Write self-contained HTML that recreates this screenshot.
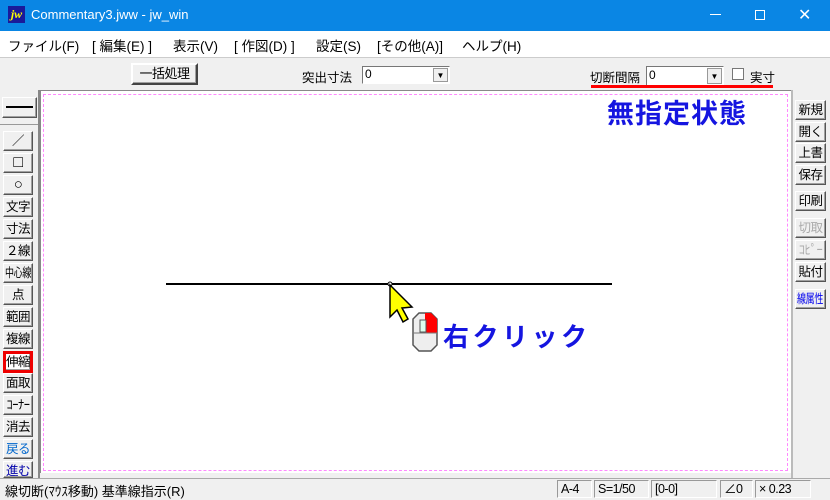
<!DOCTYPE html><html><head><meta charset="utf-8"><style>
*{margin:0;padding:0;box-sizing:border-box}
body{width:830px;height:500px;overflow:hidden;background:#f0f0f0;font-family:"Liberation Sans","Noto Sans CJK JP",sans-serif;position:relative;font-size:13px;color:#000}
.a{position:absolute}
.btn{position:absolute;background:#f0f0f0;border:1px solid;border-color:#fff #555 #555 #fff;box-shadow:inset -1px -1px 0 #a0a0a0;font-size:12.5px;text-align:center;line-height:18px;white-space:nowrap;letter-spacing:-0.5px;overflow:hidden}
.sq{display:inline-block;transform:scaleX(0.72);transform-origin:center;margin:0 -6px}
.st{position:absolute;top:480px;height:18px;border:1px solid;border-color:#999 #fff #fff #999;font-size:12.5px;padding-left:3px;line-height:16px;letter-spacing:-0.5px}
</style></head><body>
<div class="a" style="left:0;top:0;width:830px;height:31px;background:#0a86e4"></div>
<div class="a" style="left:8px;top:6px;width:17px;height:17px;background:#1a1a9a;color:#ff0;font:bold italic 12px 'Liberation Serif',serif;text-align:center;line-height:17px">jw</div>
<div class="a" style="left:31px;top:7px;color:#fff;font-size:13px">Commentary3.jww - jw_win</div>
<div class="a" style="left:710px;top:14px;width:11px;height:1px;background:#fff"></div>
<div class="a" style="left:755px;top:10px;width:10px;height:10px;border:1px solid #fff"></div>
<div class="a" style="left:798px;top:5px;color:#fff;font-size:16px">✕</div>
<div class="a" style="left:0;top:31px;width:830px;height:27px;background:#fff;border-bottom:1px solid #ccc"></div>
<div class="a" style="left:8px;top:35px;font-size:13.5px;white-space:pre">ファイル(F)</div>
<div class="a" style="left:92px;top:35px;font-size:13.5px;white-space:pre">[ 編集(E) ]</div>
<div class="a" style="left:173px;top:35px;font-size:13.5px;white-space:pre">表示(V)</div>
<div class="a" style="left:234px;top:35px;font-size:13.5px;white-space:pre">[ 作図(D) ]</div>
<div class="a" style="left:316px;top:35px;font-size:13.5px;white-space:pre">設定(S)</div>
<div class="a" style="left:377px;top:35px;font-size:13.5px;white-space:pre">[その他(A)]</div>
<div class="a" style="left:462px;top:35px;font-size:13.5px;white-space:pre">ヘルプ(H)</div>
<div class="btn" style="left:131px;top:63px;width:67px;height:22px;border:2px solid;border-color:#fff #444 #444 #fff;font-size:13px;line-height:17px">一括処理</div>
<div class="a" style="left:302px;top:67px;font-size:12.5px">突出寸法</div>
<div class="a" style="left:362px;top:66px;width:88px;height:18px;background:#fff;border:1px solid;border-color:#777 #fff #fff #777;font-size:12px;padding-left:2px;line-height:15px">0<div class="a" style="right:1px;top:1px;width:15px;height:14px;background:#f0f0f0;border:1px solid #999;font-size:8px;text-align:center;line-height:13px">▼</div></div>
<div class="a" style="left:590px;top:67px;font-size:12.5px">切断間隔</div>
<div class="a" style="left:646px;top:66px;width:78px;height:20px;background:#fff;border:1px solid;border-color:#777 #fff #fff #777;font-size:12px;padding-left:2px;line-height:17px">0<div class="a" style="right:1px;top:1px;width:15px;height:16px;background:#f0f0f0;border:1px solid #999;font-size:8px;text-align:center;line-height:15px">▼</div></div>
<div class="a" style="left:732px;top:68px;width:12px;height:12px;border:1px solid #777;background:#fff"></div>
<div class="a" style="left:750px;top:67px;font-size:12.5px">実寸</div>
<div class="a" style="left:591px;top:85px;width:182px;height:3px;background:#f00"></div>
<div class="a" style="left:40px;top:90px;width:751px;height:383px;background:#fff;border-left:1px solid #888;border-top:1px solid #888"></div>
<div class="a" style="left:43px;top:94px;width:745px;height:377px;border:1px dashed #f8f"></div>
<div class="a" style="left:166px;top:283px;width:446px;height:2px;background:#000"></div>
<svg class="a" style="left:385px;top:280px" width="30" height="46"><circle cx="5" cy="4" r="2" fill="#fff" stroke="#000"/><path d="M5 5 L5 37 L12 30 L18 42 L23 39 L17 28 L27 27 Z" fill="#ff0" stroke="#000" stroke-width="1.5"/></svg>
<svg class="a" style="left:412px;top:311px" width="27" height="42"><path d="M7 2 H19 L25 8 V34 L19 40 H7 L1 34 V8 Z" fill="#eee" stroke="#555" stroke-width="1.5"/><path d="M13 2 H19 L25 8 V22 H13 Z" fill="#f00"/><rect x="8" y="9" width="6" height="12" fill="#dfe" stroke="#555"/><path d="M1 22 H25" stroke="#777"/></svg>
<div class="a" style="left:443px;top:317px;color:#1515e0;font-size:26px;font-weight:bold;letter-spacing:3.5px">右クリック</div>
<div class="a" style="left:607px;top:92px;color:#1515e0;font-size:27px;font-weight:bold;letter-spacing:1px">無指定状態</div>
<div class="a" style="left:38px;top:90px;width:2px;height:388px;background:#888"></div>
<div class="btn" style="left:2px;top:97px;width:35px;height:21px"><div class="a" style="left:3px;top:8px;width:27px;height:2px;background:#000"></div></div>
<div class="a" style="left:0;top:124px;width:38px;height:1px;background:#999"></div>
<div class="btn" style="left:3px;top:131px;width:30px;height:20px">／</div>
<div class="btn" style="left:3px;top:153px;width:30px;height:20px;font-size:16px">□</div>
<div class="btn" style="left:3px;top:175px;width:30px;height:20px;font-size:15px">○</div>
<div class="btn" style="left:3px;top:197px;width:30px;height:20px">文字</div>
<div class="btn" style="left:3px;top:219px;width:30px;height:20px">寸法</div>
<div class="btn" style="left:3px;top:241px;width:30px;height:20px">２線</div>
<div class="btn" style="left:3px;top:263px;width:30px;height:20px"><span class="sq">中心線</span></div>
<div class="btn" style="left:3px;top:285px;width:30px;height:20px">点</div>
<div class="btn" style="left:3px;top:307px;width:30px;height:20px">範囲</div>
<div class="btn" style="left:3px;top:329px;width:30px;height:20px">複線</div>
<div class="btn" style="left:3px;top:351px;width:30px;height:22px;border:3px solid #e00;background:#fff;line-height:16px">伸縮</div>
<div class="btn" style="left:3px;top:373px;width:30px;height:20px">面取</div>
<div class="btn" style="left:3px;top:395px;width:30px;height:20px">ｺｰﾅｰ</div>
<div class="btn" style="left:3px;top:417px;width:30px;height:20px">消去</div>
<div class="btn" style="left:3px;top:439px;width:30px;height:20px;color:#06c">戻る</div>
<div class="btn" style="left:3px;top:461px;width:30px;height:17px;color:#00a">進む</div>
<div class="a" style="left:791px;top:90px;width:2px;height:388px;background:#bbb"></div>
<div class="btn" style="left:795px;top:100px;width:31px;height:20px">新規</div>
<div class="btn" style="left:795px;top:122px;width:31px;height:20px">開く</div>
<div class="btn" style="left:795px;top:143px;width:31px;height:20px">上書</div>
<div class="btn" style="left:795px;top:165px;width:31px;height:20px">保存</div>
<div class="btn" style="left:795px;top:191px;width:31px;height:20px">印刷</div>
<div class="btn" style="left:795px;top:218px;width:31px;height:20px;color:#aaa">切取</div>
<div class="btn" style="left:795px;top:240px;width:31px;height:20px;color:#aaa">ｺﾋﾟｰ</div>
<div class="btn" style="left:795px;top:262px;width:31px;height:20px">貼付</div>
<div class="btn" style="left:795px;top:289px;width:31px;height:20px;color:#00e"><span class="sq">線属性</span></div>
<div class="a" style="left:0;top:478px;width:830px;height:22px;border-top:1px solid #aaa"></div>
<div class="a" style="left:5px;top:481px;font-size:13px">線切断(ﾏｳｽ移動) 基準線指示(R)</div>
<div class="st" style="left:557px;width:35px">A-4</div>
<div class="st" style="left:594px;width:55px">S=1/50</div>
<div class="st" style="left:651px;width:66px">[0-0]</div>
<div class="st" style="left:720px;width:33px">∠0</div>
<div class="st" style="left:755px;width:56px">× 0.23</div>
</body></html>
